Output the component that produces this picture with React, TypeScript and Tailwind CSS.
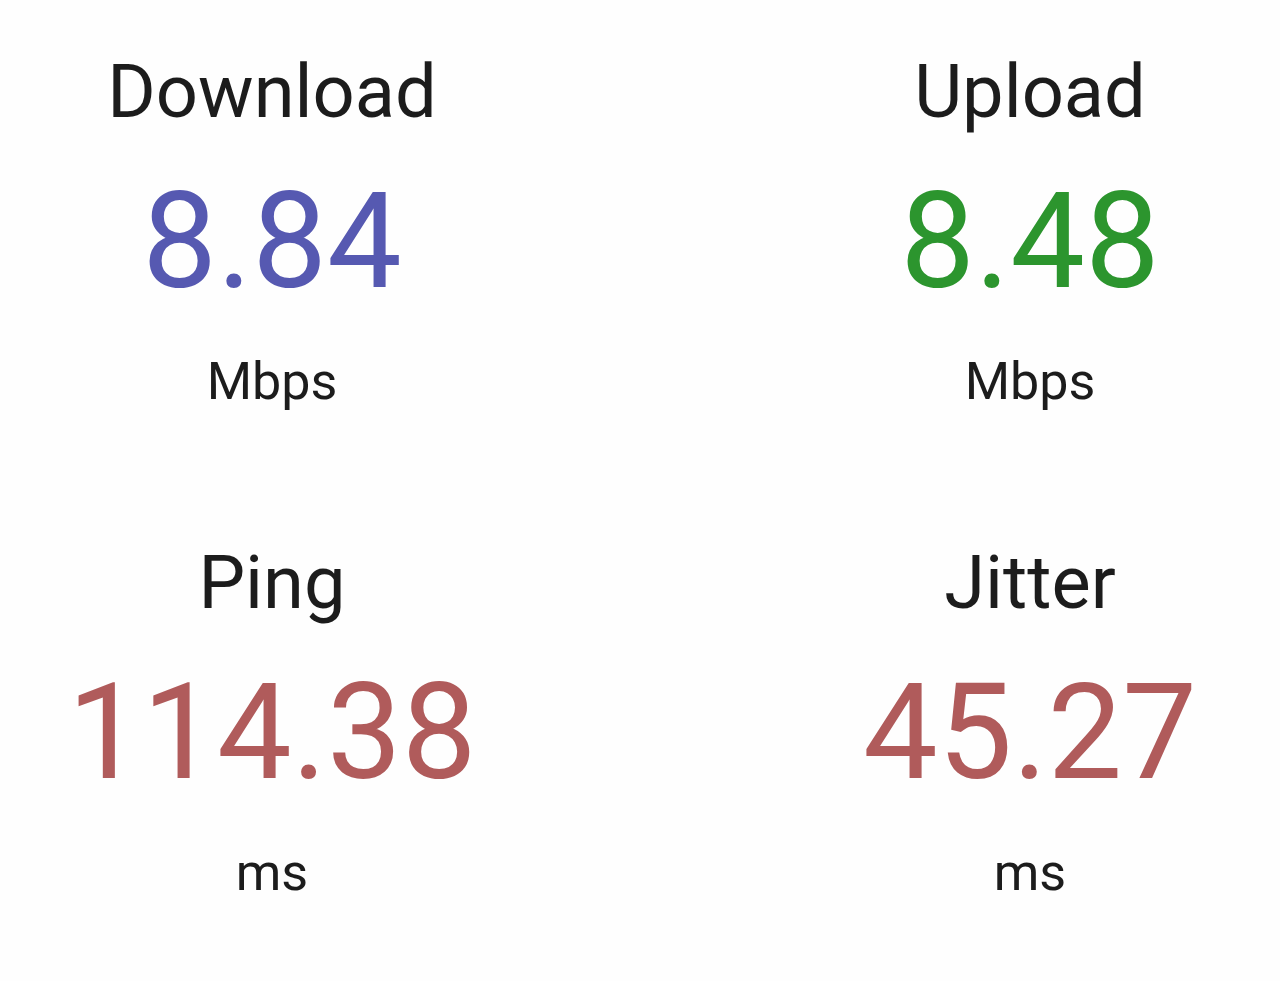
import React from "react";

type Stat = {
  label: string;
  value: string;
  unit: string;
  color: string;
};

const stats: Stat[] = [
  { label: "Download", value: "8.84", unit: "Mbps", color: "text-[#5659b1]" },
  { label: "Upload", value: "8.48", unit: "Mbps", color: "text-[#2c952e]" },
  { label: "Ping", value: "114.38", unit: "ms", color: "text-[#b05b5b]" },
  { label: "Jitter", value: "45.27", unit: "ms", color: "text-[#b05b5b]" },
];

function StatCell({ stat }: { stat: Stat }) {
  return (
    <div className="flex flex-col items-center">
      <div className="text-[74px] leading-none text-[#1c1c1c]">{stat.label}</div>
      <div className={`mt-[46px] text-[133px] leading-none ${stat.color}`}>{stat.value}</div>
      <div className="mt-[48px] text-[52px] leading-none text-[#1c1c1c]">{stat.unit}</div>
    </div>
  );
}

export default function App() {
  return (
    <div
      className="w-[1280px] h-[981px] bg-[#fefefe] pt-[55px] pl-[22px]"
      style={{ fontFamily: "Roboto, 'Liberation Sans', sans-serif" }}
    >
      <div className="grid grid-cols-[500px_500px] gap-x-[258px] gap-y-[138px]">
        {stats.map((s) => (
          <StatCell key={s.label} stat={s} />
        ))}
      </div>
    </div>
  );
}
